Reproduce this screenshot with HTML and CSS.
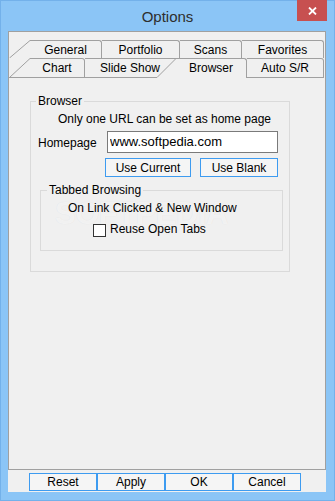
FILE: index.html
```html
<!DOCTYPE html>
<html lang="en">

<head>
    <meta charset="UTF-8">
    <meta name="viewport" content="width=device-width, initial-scale=1.0">
    <title>Options</title>
    <link rel="stylesheet" href="styles.css">
</head>

<body>
    <div class="window">
        <div class="titlebar">
            <span></span>
            <div class="title">Options</div>
            <div class="title-right">
                <button class="close" title="Close">
                    <svg width="9" height="8" viewBox="0 0 9 8">
                        <path d="M1 0.5 L8 7.5 M8 0.5 L1 7.5" stroke="#fff" stroke-width="1.8" />
                    </svg>
                </button>
            </div>
        </div>

        <div class="client">
            <div class="tabctrl">
                <div class="tab-row row-back">
                    <span class="slant slant-back">
                        <svg width="21" height="18" viewBox="0 0 21 18">
                            <path d="M0.5 18 L21 0.5" stroke="#a0a0a0" fill="none" />
                        </svg>
                    </span>
                    <div class="tab tab-general">General</div>
                    <div class="tab tab-portfolio">Portfolio</div>
                    <div class="tab tab-scans">Scans</div>
                    <div class="tab tab-favorites">Favorites</div>
                </div>
                <div class="tab-row row-front">
                    <span class="slant slant-front">
                        <svg width="21" height="20" viewBox="0 0 21 20">
                            <path d="M0.5 19.5 L21 0.5 M0 19.5 H21" stroke="#a0a0a0" fill="none" />
                        </svg>
                    </span>
                    <div class="tab tab-chart">Chart</div>
                    <div class="tab tab-slide">Slide Show</div>
                    <span class="slant slant-mid">
                        <svg width="19" height="20" viewBox="0 0 19 20">
                            <path d="M0 19.5 L19 0.5 M0 0.5 H19" stroke="#a0a0a0" fill="none" />
                        </svg>
                    </span>
                    <div class="tab tab-active">Browser</div>
                    <div class="tab tab-auto">Auto S/R</div>
                </div>

                <div class="page">
                    <div class="watermark">SOFTPEDIA</div>

                    <fieldset class="group group-browser">
                        <legend>Browser</legend>
                        <p class="note">Only one URL can be set as home page</p>
                        <div class="home-row">
                            <label for="homepage">Homepage</label>
                            <input type="text" id="homepage" value="www.softpedia.com">
                        </div>
                        <div class="btn-row">
                            <button class="btn btn-current">Use Current</button>
                            <button class="btn btn-blank">Use Blank</button>
                        </div>

                        <fieldset class="group group-tabbed">
                            <legend>Tabbed Browsing</legend>
                            <p class="note note-tabbed">On Link Clicked &amp; New Window</p>
                            <label class="check">
                                <input type="checkbox">
                                <span>Reuse Open Tabs</span>
                            </label>
                        </fieldset>
                    </fieldset>
                </div>
            </div>

            <div class="dialog-buttons">
                <button class="btn dlg">Reset</button>
                <button class="btn dlg">Apply</button>
                <button class="btn dlg">OK</button>
                <button class="btn dlg">Cancel</button>
            </div>
        </div>
    </div>
</body>

</html>
```

FILE: styles.css
```css
* {
    box-sizing: border-box;
}

body {
    margin: 0;
    padding: 0;
    width: 335px;
    height: 501px;
    background: #8bc5f6;
    font-family: "Liberation Sans", Arial, sans-serif;
    font-size: 12px;
    color: #000;
}

.window {
    height: 501px;
    border: 1px solid #73b1ea;
    display: flex;
    flex-direction: column;
}

/* title bar */
.titlebar {
    height: 30px;
    display: grid;
    grid-template-columns: 1fr auto 1fr;
}

.title {
    font-size: 15px;
    line-height: 28px;
    padding-top: 2px;
    color: #2e2e2e;
}

.title-right {
    display: flex;
    justify-content: flex-end;
    align-items: flex-start;
}

.close {
    width: 30px;
    height: 21px;
    margin: -1px 7px 0 0;
    padding: 0;
    border: 0;
    background: #c75050;
    display: flex;
    justify-content: center;
    align-items: center;
}

/* client area */
.client {
    flex: 1;
    margin: 0 8px 8px 7px;
    background: #f0f0f0;
    display: flex;
    flex-direction: column;
}

.tabctrl {
    height: 439px;
    border: 1px solid #a0a0a0;
    padding-top: 8px;
    display: flex;
    flex-direction: column;
}

.tab-row {
    display: flex;
}

.row-back {
    height: 18px;
}

.row-front {
    height: 20px;
}

.slant {
    display: flex;
}

.slant-back,
.slant-front {
    width: 21px;
}

.slant-mid {
    width: 19px;
}

.tab {
    border-top: 1px solid #a0a0a0;
    border-right: 1px solid #a0a0a0;
    border-top-right-radius: 3px;
    text-align: center;
    white-space: nowrap;
}

.row-back .tab {
    line-height: 15px;
    padding-top: 2px;
}

.row-front .tab {
    line-height: 18px;
    border-bottom: 1px solid #a0a0a0;
}

.tab-general { width: 72px; }
.tab-portfolio { width: 78px; }
.tab-scans { width: 62px; }
.tab-favorites { width: 82px; }
.tab-chart { width: 55px; }

.tab-slide {
    width: 72px;
    border-right: 0;
    border-top-right-radius: 0;
    text-align: left;
    padding-left: 15px;
}

.row-front .tab-active {
    width: 71px;
    border-bottom: 0;
}

.tab-auto { width: 77px; }

.page {
    flex: 1;
    position: relative;
}

/* group boxes */
.group {
    margin: 0;
    border: 1px solid #dadada;
}

.group legend {
    padding: 0 2px;
    line-height: 14px;
}

.group-browser {
    position: relative;
    z-index: 1;
    width: 260px;
    margin: 16px 0 0 21px;
    padding: 4px 5px 20px 5px;
}

.note {
    margin: 0 0 0 22px;
    line-height: 14px;
}

.home-row {
    margin-top: 5px;
    display: flex;
    align-items: center;
}

.home-row label {
    width: 71px;
    padding: 2px 0 0 2px;
    line-height: 14px;
}

.home-row input {
    width: 171px;
    height: 22px;
    border: 1px solid #7a7a7a;
    padding: 0 2px 2px 2px;
    font-family: "Liberation Sans", Arial, sans-serif;
    font-size: 13px;
    color: #000;
    background: #fff;
    outline: none;
}

.btn-row {
    margin: 5px 0 0 69px;
    display: flex;
    gap: 9px;
}

.btn {
    height: 19px;
    padding: 0;
    border: 1px solid #3d9bf0;
    background: #f5f5f5;
    font-family: "Liberation Sans", Arial, sans-serif;
    font-size: 12px;
    color: #000;
    line-height: 16px;
}

.btn-current { width: 86px; }
.btn-blank { width: 78px; }

.group-tabbed {
    width: 243px;
    margin: 6px 0 0 4px;
    padding: 4px 6px 13px 6px;
}

.note-tabbed {
    margin-left: 21px;
}

.check {
    margin: 9px 0 0 46px;
    display: flex;
    align-items: flex-start;
}

.check input {
    appearance: none;
    width: 13px;
    height: 13px;
    margin: 0;
    border: 1px solid #333;
    background: #fff;
}

.check span {
    margin: -1px 0 0 4px;
    line-height: 13px;
}

/* faint watermark stamped over the screenshot */
.watermark {
    position: absolute;
    left: 46px;
    top: 118px;
    z-index: 0;
    font-size: 31px;
    font-weight: bold;
    letter-spacing: -0.5px;
    color: rgba(255, 255, 255, 0.6);
    text-shadow: 0 0 1px rgba(0, 0, 0, 0.08);
    pointer-events: none;
}

/* bottom buttons */
.dialog-buttons {
    margin: 3px 0 0 21px;
    display: flex;
}

.dlg {
    width: 68px;
    height: 18px;
    line-height: 15px;
}
```
